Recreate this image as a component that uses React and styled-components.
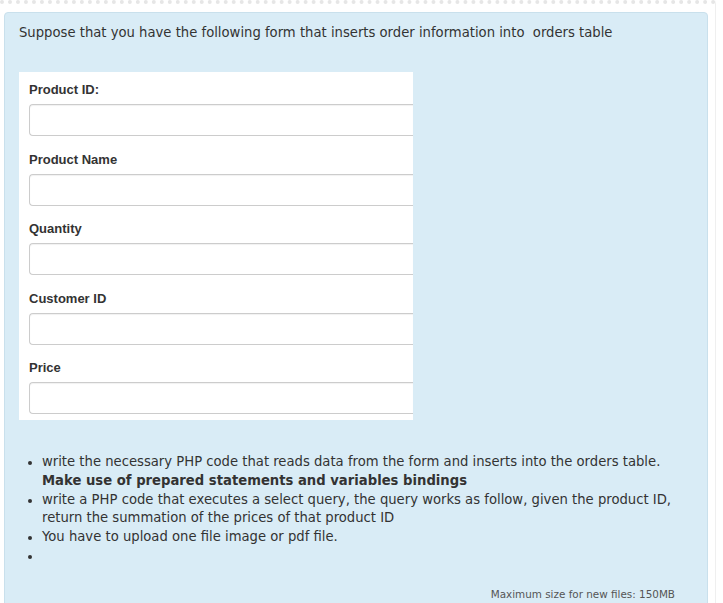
import React from 'react';
import styled, { createGlobalStyle } from 'styled-components';

const GlobalStyle = createGlobalStyle`
  html, body {
    margin: 0;
    padding: 0;
    background: #ffffff;
  }
  body {
    font-family: "DejaVu Sans", Verdana, sans-serif;
  }
`;

const Page = styled.div`
  width: 716px;
  padding-top: 1px;
  border-top: 4px dotted #e6e6e6;
  border-right: 1px solid #efefef;
  min-height: 598px;
  box-sizing: border-box;
  overflow: hidden;
`;

const Panel = styled.div`
  margin: 7px 0 0 4px;
  width: 704px;
  box-sizing: border-box;
  background: #d9ecf6;
  border: 1px solid #c9e0ec;
  border-radius: 4px;
  padding: 11px 12px 20px 14px;
  color: #333333;
  font-size: 13.2px;
`;

const Intro = styled.p`
  margin: 0;
  line-height: 18px;
`;

const FormBox = styled.div`
  margin-top: 30px;
  width: 394px;
  background: #ffffff;
  padding: 11px 0 6px 10px;
  box-sizing: border-box;
`;

const Field = styled.div`
  display: flex;
  flex-direction: column;
  & + & {
    margin-top: 16.5px;
  }
`;

const Label = styled.label`
  font-family: "Liberation Sans", Arial, sans-serif;
  font-weight: bold;
  font-size: 13px;
  color: #333333;
  line-height: 14px;
  margin-bottom: 7px;
`;

const Input = styled.input`
  height: 32px;
  width: 100%;
  box-sizing: border-box;
  border: 1px solid #cccccc;
  border-right: none;
  border-radius: 4px 0 0 4px;
  background: #ffffff;
  box-shadow: inset 0 1px 1px rgba(0, 0, 0, 0.06);
`;

const List = styled.ul`
  margin: 33px 0 0;
  padding-left: 23px;
  line-height: 18.8px;
`;

const Item = styled.li`
  &::marker {
    font-size: 12px;
  }
`;

const Footer = styled.div`
  margin-top: 22px;
  text-align: right;
  padding-right: 20px;
  font-size: 10.4px;
  color: #555555;
`;

const fields = ['Product ID:', 'Product Name', 'Quantity', 'Customer ID', 'Price'];

export default function App() {
  return (
    <>
      <GlobalStyle />
      <Page>
        <Panel>
          <Intro>Suppose that you have the following form that inserts order information into&nbsp; orders table</Intro>
          <FormBox>
            {fields.map((f) => (
              <Field key={f}>
                <Label>{f}</Label>
                <Input type="text" />
              </Field>
            ))}
          </FormBox>
          <List>
            <Item>
              write the necessary PHP code that reads data from the form and inserts into the orders table.
              <br />
              <strong>Make use of prepared statements and variables bindings</strong>
            </Item>
            <Item>
              write a PHP code that executes a select query, the query works as follow, given the product ID, return the summation of the prices of that product ID
            </Item>
            <Item>You have to upload one file image or pdf file.</Item>
            <Item>&nbsp;</Item>
          </List>
          <Footer>Maximum size for new files: 150MB</Footer>
        </Panel>
      </Page>
    </>
  );
}
